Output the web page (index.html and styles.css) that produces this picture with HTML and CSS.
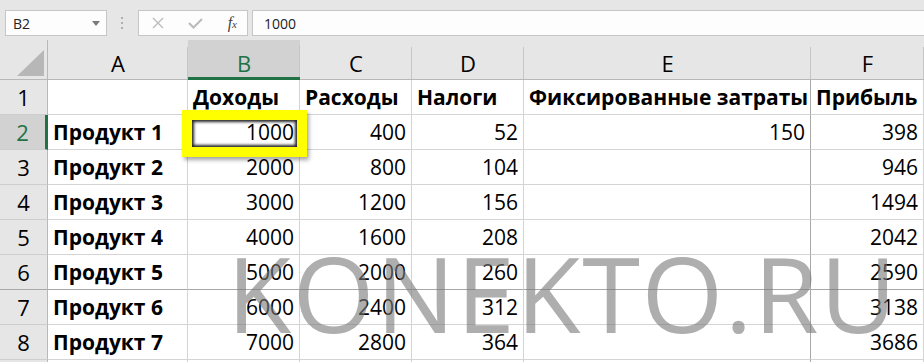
FILE: index.html
```html
<!DOCTYPE html>
<html lang="ru">
<head>
  <meta charset="UTF-8">
  <title>Excel - Продукты</title>
  <link rel="stylesheet" href="styles.css">
</head>
<body>

  <div class="toolbar">
    <div class="namebox">
      <span>B2</span>
      <svg class="arrow" width="8" height="5" viewBox="0 0 8 5"><path d="M0 0h8L4 5z" fill="#7a7a7a"/></svg>
    </div>
    <div class="grip">
      <svg width="3" height="12" viewBox="0 0 3 12"><rect x="0" y="0" width="2" height="2" fill="#b0b0b0"/><rect x="0" y="5" width="2" height="2" fill="#b0b0b0"/><rect x="0" y="10" width="2" height="2" fill="#b0b0b0"/></svg>
    </div>
    <div class="fxbox">
      <svg width="12" height="12" viewBox="0 0 12 12"><path d="M1 1l10 10M11 1L1 11" stroke="#bcbcbc" stroke-width="1.4" fill="none"/></svg>
      <svg width="15" height="12" viewBox="0 0 15 12"><path d="M1 6l4.5 4.5L14 2" stroke="#bcbcbc" stroke-width="2.2" fill="none"/></svg>
      <span class="fx">f<small>x</small></span>
    </div>
    <div class="formula">1000</div>
  </div>

  <div class="sheet">
    <div class="cell corner">
      <svg width="27" height="26" viewBox="0 0 27 26"><path d="M27 0V26H0z" fill="#b7b7b7"/></svg>
    </div>
    <div class="cell ch">A</div>
    <div class="cell ch active">B</div>
    <div class="cell ch">C</div>
    <div class="cell ch">D</div>
    <div class="cell ch break">E</div>
    <div class="cell ch">F</div>

    <div class="cell rh">1</div>
    <div class="cell"></div>
    <div class="cell bold">Доходы</div>
    <div class="cell bold">Расходы</div>
    <div class="cell bold">Налоги</div>
    <div class="cell bold break">Фиксированные затраты</div>
    <div class="cell bold">Прибыль</div>

    <div class="cell rh active">2</div>
    <div class="cell bold">Продукт 1</div>
    <div class="cell num">1000</div>
    <div class="cell num">400</div>
    <div class="cell num">52</div>
    <div class="cell num break">150</div>
    <div class="cell num">398</div>

    <div class="cell rh">3</div>
    <div class="cell bold">Продукт 2</div>
    <div class="cell num">2000</div>
    <div class="cell num">800</div>
    <div class="cell num">104</div>
    <div class="cell num break"></div>
    <div class="cell num">946</div>

    <div class="cell rh">4</div>
    <div class="cell bold">Продукт 3</div>
    <div class="cell num">3000</div>
    <div class="cell num">1200</div>
    <div class="cell num">156</div>
    <div class="cell num break"></div>
    <div class="cell num">1494</div>

    <div class="cell rh">5</div>
    <div class="cell bold">Продукт 4</div>
    <div class="cell num">4000</div>
    <div class="cell num">1600</div>
    <div class="cell num">208</div>
    <div class="cell num break"></div>
    <div class="cell num">2042</div>

    <div class="cell rh pagebreak">6</div>
    <div class="cell bold pagebreak">Продукт 5</div>
    <div class="cell num pagebreak">5000</div>
    <div class="cell num pagebreak">2000</div>
    <div class="cell num pagebreak">260</div>
    <div class="cell num break pagebreak"></div>
    <div class="cell num pagebreak">2590</div>

    <div class="cell rh">7</div>
    <div class="cell bold">Продукт 6</div>
    <div class="cell num">6000</div>
    <div class="cell num">2400</div>
    <div class="cell num">312</div>
    <div class="cell num break"></div>
    <div class="cell num">3138</div>

    <div class="cell rh">8</div>
    <div class="cell bold">Продукт 7</div>
    <div class="cell num">7000</div>
    <div class="cell num">2800</div>
    <div class="cell num">364</div>
    <div class="cell num break"></div>
    <div class="cell num">3686</div>

    <div class="cell stub rh"></div>
    <div class="cell stub"></div>
    <div class="cell stub"></div>
    <div class="cell stub"></div>
    <div class="cell stub"></div>
    <div class="cell stub break"></div>
    <div class="cell stub"></div>

    <div class="highlight"></div>
    <div class="watermark">KONEKTO.RU</div>
  </div>

</body>
</html>
```

FILE: styles.css
```css
body {
  margin: 0;
  width: 924px;
  height: 362px;
  overflow: hidden;
  background-color: #e6e6e6;
  font-family: 'Open Sans', 'Noto Sans', sans-serif;
}
.toolbar {
  height: 40px;
  display: flex;
  align-items: flex-start;
  padding: 10px 0 0 5px;
  box-sizing: border-box;
}
.namebox, .fxbox, .formula {
  height: 26px;
  box-sizing: border-box;
  border: 1px solid #c6c6c6;
  background-color: #fdfdfd;
  display: flex;
  align-items: center;
  font-size: 14px;
  color: #222;
}
.namebox {
  width: 102px;
  padding: 0 6px 0 7px;
  justify-content: space-between;
}
.grip {
  width: 31px;
  height: 26px;
  display: flex;
  align-items: center;
  justify-content: center;
}
.fxbox {
  width: 110px;
  padding: 0 10px 0 13px;
  justify-content: space-between;
}
.fx {
  font-family: 'Liberation Serif', serif;
  font-style: italic;
  font-size: 16px;
  color: #444;
}
.fx small {
  font-size: 11px;
}
.formula {
  flex: 1;
  margin-left: 4px;
  border-right: none;
  padding-left: 11px;
}

.sheet {
  position: relative;
  display: grid;
  grid-template-columns: 48px 140px 112px 112px 112px 287px 113px;
  grid-template-rows: 40px repeat(8, 35px) 2px;
  background-color: #fff;
}
.cell {
  box-sizing: border-box;
  border-right: 1px solid #d4d4d4;
  border-bottom: 1px solid #d4d4d4;
  font-size: 21px;
  line-height: 20px;
  color: #000;
  display: flex;
  align-items: flex-end;
  padding: 0 5px 7px 5px;
  white-space: nowrap;
}
.cell.stub {
  padding: 0;
  border-bottom: none;
}
.bold {
  font-weight: bold;
}
.num {
  justify-content: flex-end;
}
.corner {
  background-color: #e6e6e6;
  border-right-color: #b8b8b8;
  border-bottom-color: #b8b8b8;
  padding: 0 3px 3px 0;
  justify-content: flex-end;
}
.ch {
  background-color: #e6e6e6;
  border-right: none;
  background-image: linear-gradient(#c6c6c6, #c6c6c6);
  background-size: 1px 32px;
  background-position: right bottom;
  background-repeat: no-repeat;
  border-bottom-color: #b8b8b8;
  justify-content: center;
  font-size: 22px;
  padding-bottom: 6px;
}
.rh {
  background-color: #e6e6e6;
  border-right-color: #b8b8b8;
  border-bottom-color: #cdcdcd;
  justify-content: center;
  font-size: 22px;
}
.ch.active {
  background-color: #d2d2d2;
  color: #217346;
  border-bottom: 3px solid #217346;
  padding-bottom: 4px;
}
.rh.active {
  background-color: #d2d2d2;
  color: #217346;
  border-right: 3px solid #217346;
}
.break {
  border-right-color: #a8a8a8;
}
.pagebreak {
  border-bottom-color: #a8a8a8;
}

.highlight {
  position: absolute;
  left: 182px;
  top: 70px;
  width: 125px;
  height: 47px;
  box-sizing: border-box;
  border: 10px solid #ffff00;
  box-shadow: 2px 3px 4px rgba(0, 0, 0, 0.35), inset 0 0 3px 2px rgba(0, 0, 0, 0.85);
}
.watermark {
  position: absolute;
  left: 227px;
  top: 200px;
  font-size: 105px;
  line-height: 105px;
  letter-spacing: 1.5px;
  color: rgba(120, 120, 120, 0.6);
  pointer-events: none;
  white-space: nowrap;
}
```
